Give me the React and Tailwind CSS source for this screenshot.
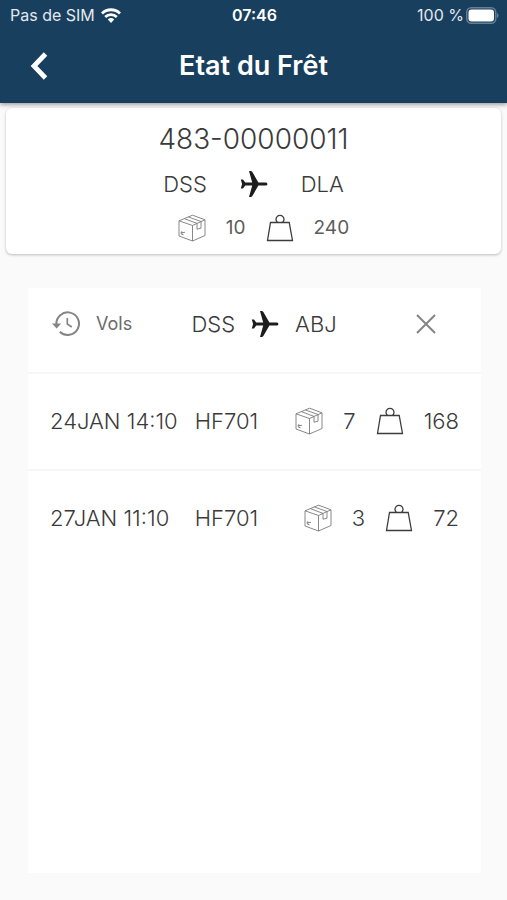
const flights = [
    { id: 1, date: '24JAN 14:10', flight: 'HF701', pieces: 7, weight: 168 },
    { id: 2, date: '27JAN 11:10', flight: 'HF701', pieces: 3, weight: 72 },
];

function WifiIcon() {
    return (
        <svg viewBox="0 0 20 15" className="h-[15px] w-5" fill="none" stroke="#fff" strokeWidth="2.8" aria-hidden="true">
            <path d="M1 5.4a12.9 12.9 0 0 1 18 0" />
            <path d="M4.2 9a8.3 8.3 0 0 1 11.6 0" />
            <path d="M10 15l-3.2-3.4a4.7 4.7 0 0 1 6.4 0z" fill="#fff" stroke="none" />
        </svg>
    );
}

function BatteryIcon() {
    return (
        <svg viewBox="0 0 33 17" className="h-[17px] w-[33px]" aria-hidden="true">
            <rect x="0.75" y="0.75" width="29" height="15.5" rx="4.5" fill="none" stroke="#657f96" strokeWidth="1.5" />
            <rect x="2.5" y="2.5" width="25.5" height="12" rx="3" fill="#fff" />
            <path d="M31 6v5c2-.8 2-4.2 0-5z" fill="#657f96" />
        </svg>
    );
}

function PlaneIcon() {
    return (
        <svg viewBox="0 0 28 28" className="size-7 shrink-0 text-[#1c1c1c]" fill="currentColor" aria-hidden="true">
            <path d="M25.5 12.4H18.4L12.2 1.8C11.9 1.2 11.4 1 10.7 1H9L12.2 12.4H5.2L3 9.5H.8L2.1 14L.8 18.5H3L5.2 15.6H12.2L9 27H10.7C11.4 27 11.9 26.8 12.2 26.2L18.4 15.6H25.5C26.6 15.6 27.4 14.9 27.4 14S26.6 12.4 25.5 12.4Z" />
        </svg>
    );
}

function BoxIcon() {
    return (
        <svg viewBox="0 0 28 28" className="size-7 shrink-0 text-[#7a7a7a]" fill="none" stroke="currentColor" strokeWidth="0.9" strokeLinejoin="round" aria-hidden="true">
            <path d="M1 6.8L14.5 1.2L27 5.8V21.5L14.5 27L1 22Z" />
            <path d="M1 6.8L14.5 11.5L27 5.8M14.5 11.5V27" />
            <path d="M6.5 4.7L19 9.4M10.5 3L23 7.5" />
            <path d="M19 9.4V15.2L23 14.2V7.5" />
            <path d="M2.5 18.8L7 18.3M3.8 17.2V20.2M3.5 20.2L5.5 20.8" />
        </svg>
    );
}

function WeightIcon() {
    return (
        <svg viewBox="0 0 28 28" className="size-7 shrink-0 text-[#3d3d3d]" fill="none" stroke="currentColor" strokeWidth="1.3" aria-hidden="true">
            <path d="M4.5 8.5H23.2L26.5 26.5H1.5Z" />
            <path d="M11.5 8.5a4 4 0 1 1 5 0" />
        </svg>
    );
}

function HistoryIcon() {
    return (
        <svg viewBox="0 0 28 28" className="size-7 shrink-0 text-[#858585]" fill="none" stroke="currentColor" strokeWidth="2" aria-hidden="true">
            <path d="M4.4 14.5A11.3 11.3 0 1 1 7.8 21.8" />
            <path d="M0 13.500H9.200L4.600 18.500Z" fill="currentColor" stroke="none" />
            <path d="M15.300 8V14L19.800 17" strokeWidth="1.7" />
        </svg>
    );
}

function StatusBar() {
    return (
        <div className="grid h-[30px] grid-cols-3 items-center pr-2 pl-[10px] text-base">
            <div className="flex items-center gap-[6px] whitespace-nowrap text-[#e3e9ee]">
                Pas de SIM
                <WifiIcon />
            </div>
            <div className="text-center font-semibold">07:46</div>
            <div className="flex items-center justify-end gap-[2px] whitespace-nowrap text-[#e3e9ee]">
                100 %
                <BatteryIcon />
            </div>
        </div>
    );
}

function Header() {
    return (
        <header className="relative z-10 bg-[#193f5e] text-white shadow-[0_2px_4px_rgba(0,0,0,0.35)]">
            <StatusBar />
            <div className="grid h-[73px] grid-cols-[78px_1fr_78px] items-center pb-[2px]">
                <button type="button" aria-label="Retour" className="flex h-12 items-center justify-center">
                    <svg viewBox="0 0 18 28" className="h-7 w-[18px]" fill="none" stroke="currentColor" strokeWidth="4.8" aria-hidden="true">
                        <path d="M15.5 2L4 14L15.5 26" />
                    </svg>
                </button>
                <h1 className="text-center text-[27px] leading-8 font-semibold">Etat du Frêt</h1>
            </div>
        </header>
    );
}

function Summary() {
    return (
        <section className="mx-[6px] mt-[5px] flex flex-col items-center rounded-md bg-white pt-[15px] pb-3 text-[#3a3a3a] shadow-[0_1px_3px_rgba(0,0,0,0.25)]">
            <h2 className="text-[28px] leading-8 font-light">483-00000011</h2>
            <div className="mt-[15px] flex items-center text-[22px] leading-7 font-light">
                <span>DSS</span>
                <span className="mx-[33px]">
                    <PlaneIcon />
                </span>
                <span>DLA</span>
            </div>
            <div className="mt-4 flex items-center gap-5 pl-5 text-[19px] leading-7 text-[#5c5c5c]">
                <BoxIcon />
                <span>10</span>
                <WeightIcon />
                <span>240</span>
            </div>
        </section>
    );
}

function FlightRow({ date, flight, pieces, weight }) {
    return (
        <li className="flex h-[97px] items-center justify-between border-t-2 border-[#f6f6f6] px-[22px] pb-[2px] whitespace-nowrap">
            <span>{date}</span>
            <span>{flight}</span>
            <div className="flex items-center gap-5 pl-5">
                <BoxIcon />
                <span>{pieces}</span>
                <WeightIcon />
                <span>{weight}</span>
            </div>
        </li>
    );
}

function App() {
    return (
        <div className="flex min-h-screen flex-col bg-[#fafafa] font-['Inter',sans-serif]">
            <Header />
            <main className="flex flex-1 flex-col">
                <Summary />
                <section className="mt-[34px] mr-[26px] mb-[27px] ml-7 flex-1 bg-white text-[22px] leading-7 font-light text-[#3a3a3a]">
                    <div className="flex h-[84px] items-center pr-[45px] pl-6 pb-3">
                        <div className="flex items-center gap-4 text-[18px] font-normal text-[#6b6b6b]">
                            <HistoryIcon />
                            <span>Vols</span>
                        </div>
                        <div className="flex flex-1 items-center justify-center gap-4 pr-5">
                            <span>DSS</span>
                            <PlaneIcon />
                            <span>ABJ</span>
                        </div>
                        <button type="button" aria-label="Fermer" className="text-[#858585]">
                            <svg viewBox="0 0 20 20" className="size-5" fill="none" stroke="currentColor" strokeWidth="2" aria-hidden="true">
                                <path d="M1 1L19 19M19 1L1 19" />
                            </svg>
                        </button>
                    </div>
                    <ul>
                        {flights.map((item) => (
                            <FlightRow key={item.id} {...item} />
                        ))}
                    </ul>
                </section>
            </main>
        </div>
    );
}

export default App;
